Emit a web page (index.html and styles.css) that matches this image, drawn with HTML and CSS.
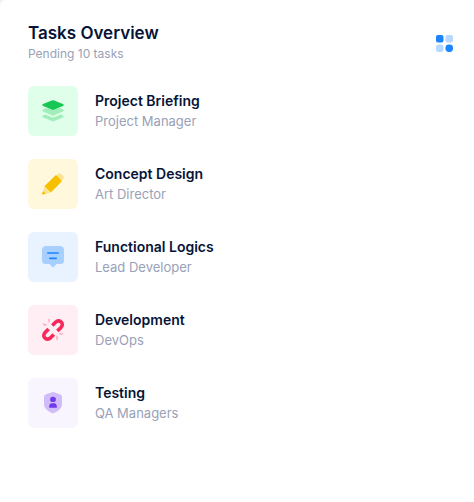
FILE: index.html
```html
<!DOCTYPE html>
<html lang="en">
<head>
<meta charset="utf-8">
<meta name="viewport" content="width=device-width, initial-scale=1">
<title>Tasks Overview</title>
<link rel="stylesheet" href="styles.css">
</head>
<body>
<main class="card">
  <header class="card-header">
    <div>
      <h1 class="card-title">Tasks Overview</h1>
      <p class="card-subtitle">Pending 10 tasks</p>
    </div>
    <button class="menu-button" type="button" aria-label="Options">
      <svg width="17" height="17" viewBox="0 0 17 17" aria-hidden="true">
        <rect width="7.5" height="7.5" rx="2" fill="#1b84ff"/>
        <rect x="9.5" width="7.5" height="7.5" rx="2" fill="#b7d8ff"/>
        <rect y="9.5" width="7.5" height="7.5" rx="2.8" fill="#b7d8ff"/>
        <rect x="9.5" y="9.5" width="7.5" height="7.5" rx="3.4" fill="#1b84ff"/>
      </svg>
    </button>
  </header>
  <ul class="task-list">
    <li class="task">
      <span class="tile tile-green">
        <svg width="24" height="24" viewBox="0 0 24 24" aria-hidden="true">
          <path fill="#a1eebb" d="M2.2 16.4 4.2 15.6 10.7 18.3Q12 18.8 13.3 18.3L19.8 15.6 21.8 16.4Q23.8 17.5 21.8 18.4L13.3 21.9Q12 22.4 10.7 21.9L2.2 18.4Q.2 17.5 2.2 16.4Z"/>
          <path fill="#a1eebb" d="M2.2 10.3 4.5 9.2H19.5L21.8 10.3Q23.8 11.4 21.8 12.4L13.3 16.2Q12 16.8 10.7 16.2L2.2 12.4Q.2 11.4 2.2 10.3Z"/>
          <path fill="#17c653" d="M2.2 5 10.7 1.5Q12 1 13.3 1.5L21.8 5Q23.8 6 21.8 7L13.3 10.6Q12 11.1 10.7 10.6L2.2 7Q.2 6 2.2 5Z"/>
        </svg>
      </span>
      <div>
        <a class="task-name" href="#">Project Briefing</a>
        <p class="task-role">Project Manager</p>
      </div>
    </li>
    <li class="task">
      <span class="tile tile-yellow">
        <svg width="24" height="24" viewBox="0 0 24 24" aria-hidden="true">
          <path fill="#fbe293" d="M14.6 4.5 17.2 1.8Q18.5.7 19.8 1.8L22.3 4.3Q23.6 5.6 22.3 7L19.5 9.5ZM3.6 14.6 9.4 20.4 1.7 22.4Q.8 22.5 1.1 21.5Z"/>
          <path fill="#f6c000" d="M3.4 14.2 14.3 3.4Q15 3 15.6 3.6L20.4 8.4Q21 9 20.4 9.7L9.8 20.4ZM2.1 19.2Q3.6 19.7 4.8 21.7L1.7 22.4Q.8 22.5 1.1 21.5Z"/>
        </svg>
      </span>
      <div>
        <a class="task-name" href="#">Concept Design</a>
        <p class="task-role">Art Director</p>
      </div>
    </li>
    <li class="task">
      <span class="tile tile-blue">
        <svg width="24" height="24" viewBox="0 0 24 24" aria-hidden="true">
          <path fill="#a8d0ff" d="M4.5 1H19.5Q23 1.5 23 5V15.5Q23 19 19.5 19H15.5L13.2 21.5Q12 22.5 10.8 21.5L8.5 19H4.5Q1 19 1 15.5V5Q1 1.5 4.5 1Z"/>
          <path fill="none" stroke="#1b84ff" stroke-width="1.6" stroke-linecap="round" d="M6.8 8H17.2M8.8 13.4H15.2"/>
        </svg>
      </span>
      <div>
        <a class="task-name" href="#">Functional Logics</a>
        <p class="task-role">Lead Developer</p>
      </div>
    </li>
    <li class="task">
      <span class="tile tile-red">
        <svg width="24" height="24" viewBox="0 0 24 24" aria-hidden="true">
          <path fill="none" stroke="#f8285a" stroke-width="3.6" d="M11.3 7.6 14.3 4.5C18.2.8 23.6 5.1 20.2 9.2L16.4 13.1M7.6 11 3.9 14.8C.5 18.9 5.9 23.4 9.8 19.6L12.8 16.5"/>
          <path fill="none" stroke="#fbafc2" stroke-width="1.5" stroke-linecap="round" d="M8 1.5V3.8M2.6 5.8 3.4 7 5.3 6.7M16 18.2V21.5M18.9 15.5 20.2 16.3 21.4 15.6"/>
        </svg>
      </span>
      <div>
        <a class="task-name" href="#">Development</a>
        <p class="task-role">DevOps</p>
      </div>
    </li>
    <li class="task">
      <span class="tile tile-purple">
        <svg width="24" height="24" viewBox="0 0 24 24" aria-hidden="true">
          <path fill="#cfbcf8" d="M11 1.3Q12 .8 13 1.3L19.4 3.6Q21 4.3 21 6V13.2C21 17 17 20.5 13.2 21.9Q12 22.4 10.8 21.9C7 20.5 3 17 3 13.2V6Q3 4.3 4.6 3.6Z"/>
          <path fill="#7239ea" d="M12 5.8a2.9 2.6 0 1 1 0 5.2a2.9 2.6 0 1 1 0-5.2ZM8.2 14.5Q9 12.2 10.5 12.2H13.5Q15 12.2 15.8 14.5V16.7H8.2Z"/>
        </svg>
      </span>
      <div>
        <a class="task-name" href="#">Testing</a>
        <p class="task-role">QA Managers</p>
      </div>
    </li>
  </ul>
</main>
</body>
</html>
```
FILE: styles.css
```css
* { box-sizing: border-box; }

body {
  margin: 0;
  background: #f1f1f4;
  font-family: Inter, "Liberation Sans", sans-serif;
}

h1, p, ul { margin: 0; padding: 0; }

.card {
  min-height: 100vh;
  padding: 22px 21px 28px 28px;
  border-top-left-radius: 6px;
  background: #fff;
  color: #071437;
}

.card-header {
  display: flex;
  align-items: center;
  justify-content: space-between;
  margin-bottom: 22px;
}

.card-title {
  font-size: 17px;
  font-weight: 600;
  line-height: 22px;
}

.card-subtitle {
  color: #99a1b7;
  font-size: 12px;
  line-height: 20px;
}

.menu-button {
  display: flex;
  padding: 0;
  border: 0;
  background: none;
  cursor: pointer;
}

.task-list {
  display: grid;
  gap: 23px;
  list-style: none;
}

.task {
  display: flex;
  align-items: center;
  gap: 17px;
}

.tile {
  display: grid;
  place-items: center;
  flex: none;
  width: 50px;
  height: 50px;
  border-radius: 6px;
}

.tile-green { background: #dfffea; }
.tile-yellow { background: #fff8dd; }
.tile-blue { background: #e9f3ff; }
.tile-red { background: #ffeef3; }
.tile-purple { background: #f8f5ff; }

.task-name {
  display: block;
  color: inherit;
  font-size: 14px;
  font-weight: 600;
  line-height: 20px;
  text-decoration: none;
}

.task-role {
  color: #99a1b7;
  font-size: 13px;
  line-height: 20px;
}
```
